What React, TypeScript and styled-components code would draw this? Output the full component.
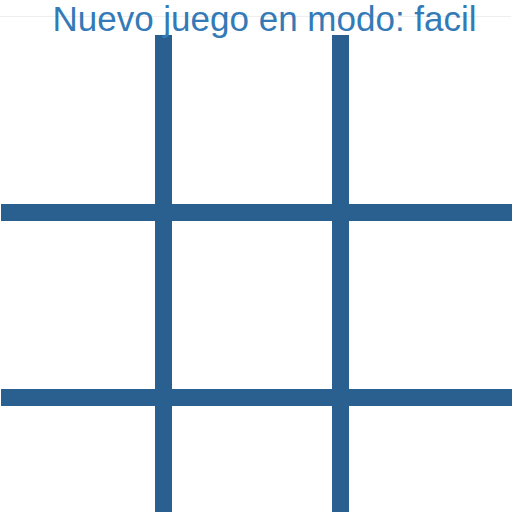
import React from "react";
import styled, { createGlobalStyle } from "styled-components";

const Global = createGlobalStyle`
  html, body {
    margin: 0;
    padding: 0;
    background: #ffffff;
    overflow: hidden;
  }
  body {
    font-family: "Liberation Sans", Arial, sans-serif;
  }
`;

const Page = styled.div`
  width: 512px;
  height: 512px;
  display: flex;
  flex-direction: column;
  overflow: hidden;
`;

const Header = styled.header`
  position: relative;
  height: 35px;
  flex: none;
  &::before {
    content: "";
    position: absolute;
    left: 0;
    right: 1px;
    top: 16px;
    height: 1px;
    background: #eeeeee;
  }
`;

const Title = styled.h1`
  position: relative;
  margin: 0;
  padding-left: 17px;
  font-family: "Liberation Sans", Arial, sans-serif;
  font-weight: 400;
  font-size: 35px;
  line-height: 38px;
  color: #337ab7;
  text-align: center;
  white-space: nowrap;
`;

const Board = styled.svg`
  display: block;
  flex: none;
`;

const BAR = "#2a6090";

export default function App() {
  const h = 520;
  return (
    <>
      <Global />
      <Page>
        <Header>
          <Title>Nuevo juego en modo: facil</Title>
        </Header>
        <Board width={512} height={h} viewBox={`0 0 512 ${h}`}>
          <rect x={155} y={0} width={17} height={h} fill={BAR} />
          <rect x={332} y={0} width={17} height={h} fill={BAR} />
          <rect x={1} y={169} width={511} height={17} fill={BAR} />
          <rect x={1} y={354} width={511} height={17} fill={BAR} />
        </Board>
      </Page>
    </>
  );
}
